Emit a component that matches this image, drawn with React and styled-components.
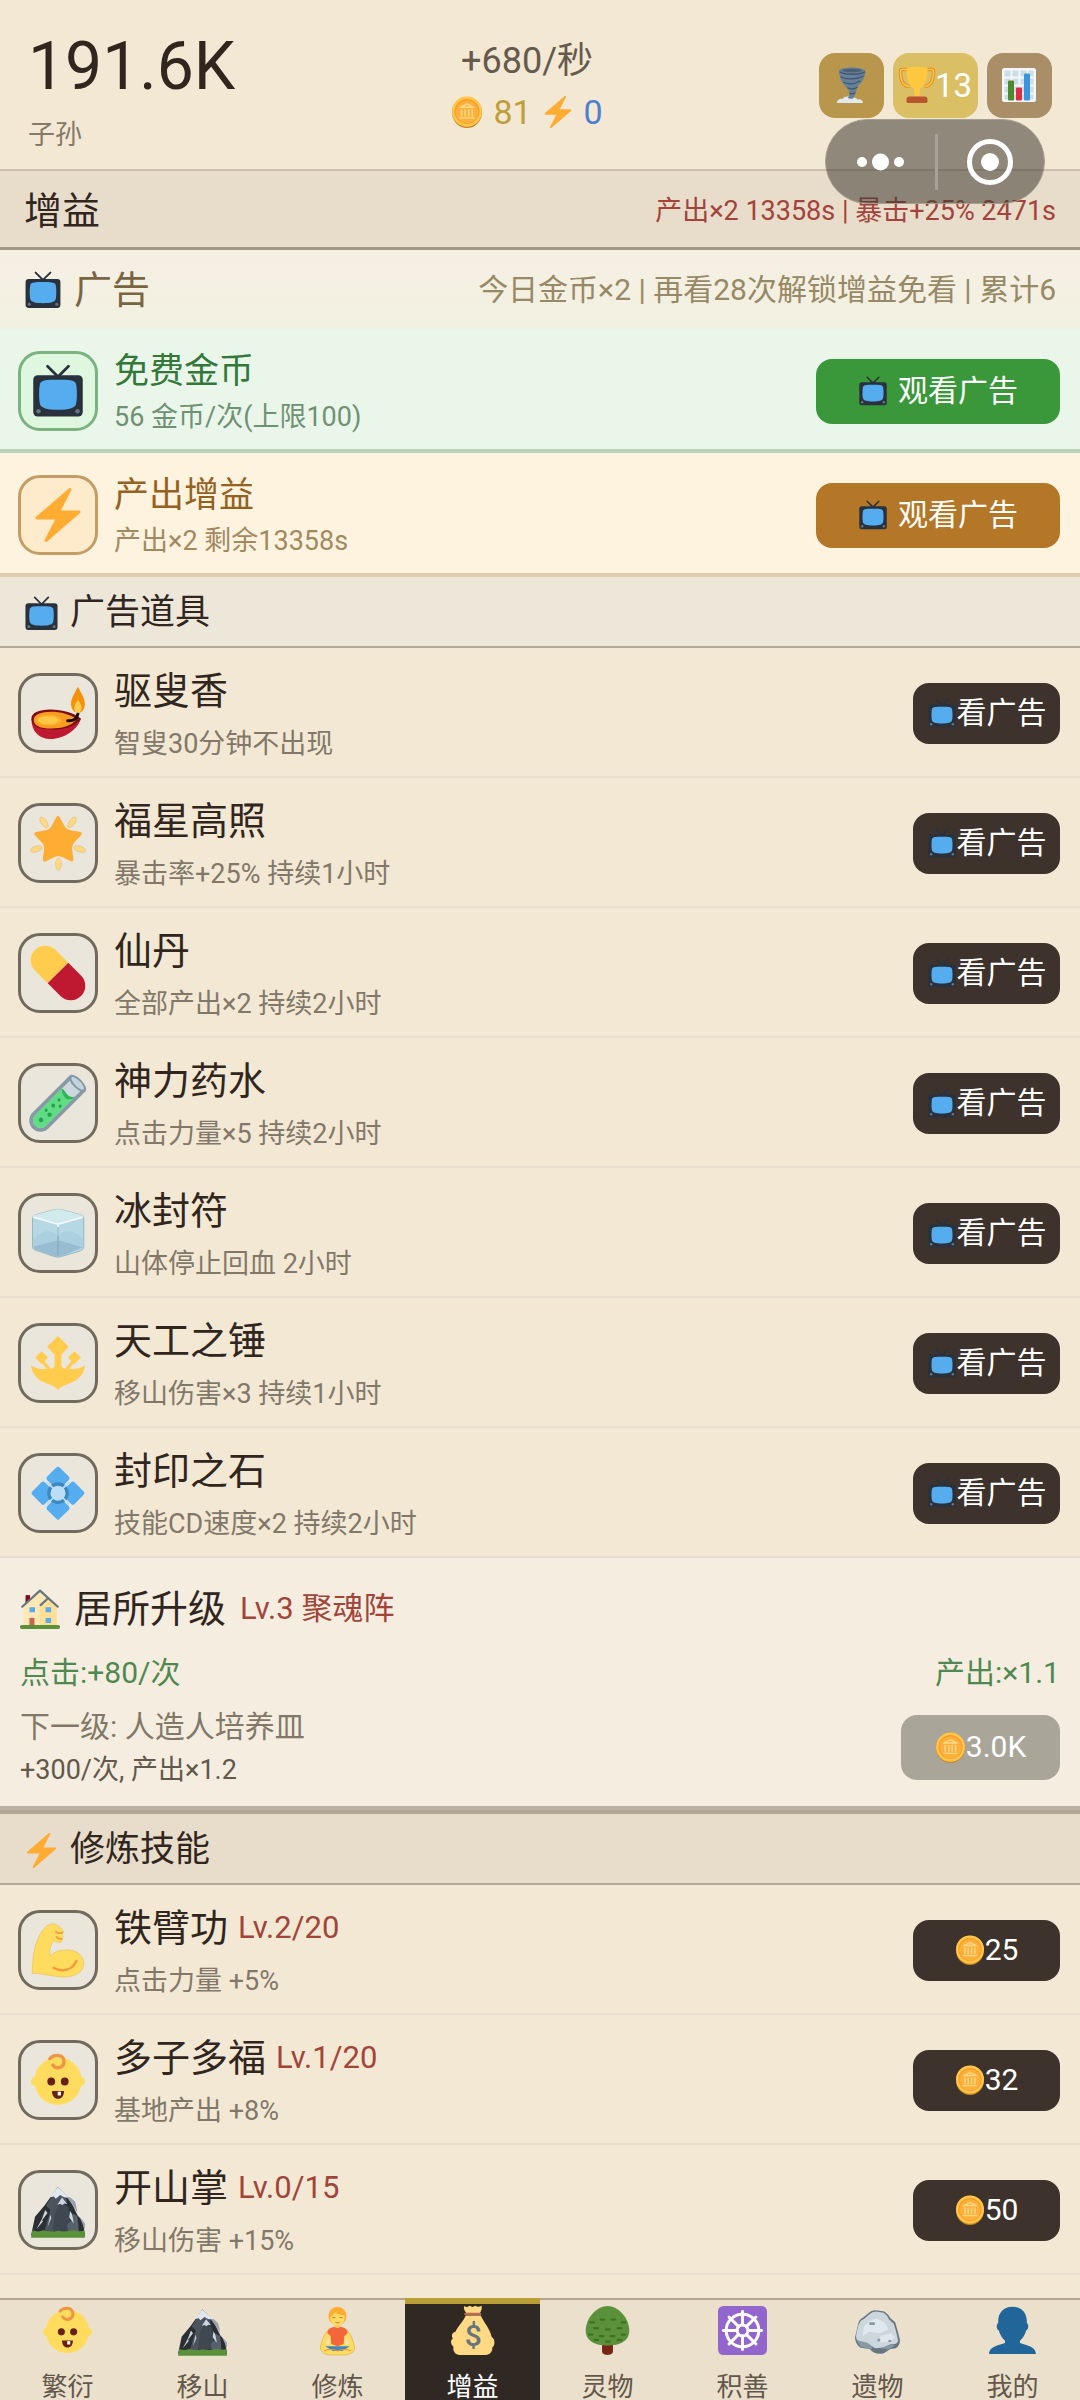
import React from 'react'
import styled, { createGlobalStyle, css } from 'styled-components'

const GlobalStyle = createGlobalStyle`
  * {
    box-sizing: border-box;
  }
  body {
    margin: 0;
    background: #f3e8d4;
    color: #30261e;
    font-family: Roboto, 'Noto Sans CJK SC', sans-serif;
  }
  button {
    font-family: inherit;
    border: 0;
    padding: 0;
    cursor: pointer;
  }
`

/* ---------- icons ---------- */

const Svg = styled.svg`
  display: block;
  flex: none;
  width: ${p => p.$size}px;
  height: ${p => p.$size}px;
`

const icons = {
  tv: (
    <>
      <path d="M11 1.5 18 8.5 25 1.5" fill="none" stroke="#29313a" strokeWidth="1.8" strokeLinecap="round" />
      <rect x="1.5" y="7.5" width="33" height="27.5" rx="3" fill="#29323c" />
      <path d="M18 10.500c8 0 10.500.3 11.700 2 1.200 1.900 1.200 13.100 0 15-1.200 1.700-3.700 3-11.700 3s-10.500-1.300-11.700-3c-1.200-1.900-1.200-13.100 0-15 1.200-1.700 3.700-2 11.700-2z" fill="#55acee" />
      <circle cx="5" cy="31.500" r="1.500" fill="#66757f" />
      <circle cx="31" cy="31.500" r="1.500" fill="#66757f" />
    </>
  ),
  bolt: (
    <path
      d="M32.938 15.651C32.792 15.260 32.418 15 32 15H19.925L26.890 1.458c.219-.426.106-.947-.271-1.243C26.437.071 26.218 0 26 0c-.233 0-.466.082-.653.243L18 6.588 3.347 19.243c-.316.273-.430.714-.284 1.105S3.582 21 4 21h12.075L9.110 34.542c-.219.426-.106.947.271 1.243.182.144.401.215.619.215.233 0 .466-.082.653-.243L18 29.412l14.653-12.655c.317-.273.430-.714.285-1.106z"
      fill="#ffac33"
    />
  ),
  coin: (
    <>
      <ellipse cx="18" cy="18.500" rx="16.800" ry="17.500" fill="#c9841f" />
      <ellipse cx="18" cy="17.500" rx="16.800" ry="17" fill="#ffc649" />
      <circle cx="18" cy="17.500" r="14" fill="#f59f27" />
      <circle cx="18" cy="18" r="12.800" fill="#fdae3b" />
      <path d="M18 8 9.500 12.300v1.200h17v-1.200zM18 9.800l3.500 1.900h-7zM11 15h1.800v8H11zm4 0h1.800v8H15zm4 0h1.800v8H19zm4 0h1.800v8H23zM9.500 24h17v1.600h-17z" fill="#ffd983" fillRule="evenodd" />
    </>
  ),
  lamp: (
    <>
      <path d="M.3 22c0 9 5.700 13.300 12.700 13.300C22 35.300 31 29 33.300 21.800z" fill="#be1931" />
      <path d="M.3 22C.1 18 5 15.700 13 15.700s16 2.300 20.300 6.100C29 28 20 29 14 29 6 29 .5 27 .3 22z" fill="#7d0c16" />
      <path d="M1.800 22.600c0-3.600 5.200-5.400 11.200-5.400 7 0 13 1.800 17.500 4.800C27 27 20 28.300 13.500 28.300 6.500 28.300 1.800 26.500 1.800 22.600z" fill="#f99d1f" />
      <ellipse cx="12" cy="22.800" rx="8.500" ry="3.600" fill="#ffac33" />
      <ellipse cx="11.500" cy="22.800" rx="6.800" ry="2.700" fill="#ffc845" />
      <path d="M24.500 23.200c3.500.3 6-1.200 6.800-4.700" fill="none" stroke="#1b0c07" strokeWidth="2" strokeLinecap="round" />
      <path d="M31.300.3c1.500 3.500 4.600 7.500 4.600 11.500 0 3.800-1.900 6-4.500 6s-4.700-2.200-4.700-6c0-4 3.200-8 4.600-11.500z" fill="#f4900c" />
      <path d="M31.300 9c.8 1.800 2.400 3.300 2.400 5.500 0 2.200-1 3.300-2.400 3.300s-2.500-1.100-2.500-3.300c0-2.200 1.700-3.700 2.500-5.500z" fill="#ffcc4d" />
    </>
  ),
  star: (
    <>
      <path
        d="M28.840 17.638c-.987 1.044-1.633 3.067-1.438 4.493l.892 6.441c.197 1.427-.701 2.087-1.996 1.469l-5.851-2.796c-1.295-.620-3.408-.611-4.700.018l-5.826 2.842c-1.291.629-2.193-.026-2.007-1.452l.843-6.449c.186-1.427-.475-3.444-1.470-4.481l-4.494-4.688c-.996-1.037-.655-2.102.755-2.365l6.370-1.188c1.410-.263 3.116-1.518 3.793-2.789L16.762.956c.675-1.271 1.789-1.274 2.473-.009L22.330 6.660c.686 1.265 2.400 2.507 3.814 2.758l6.378 1.141c1.412.252 1.761 1.314.774 2.359l-4.456 4.720z"
        fill="#ffac33"
      />
      {[[8.700, 4.300, -35], [27.300, 4.300, 35], [3.500, 22, 72], [32.500, 22, -72], [18.300, 32.200, 0]].map(([x, y, r]) => (
        <ellipse key={r} cx={x} cy={y} rx="1.900" ry="4" fill="#ffd983" stroke="#dcae62" strokeWidth=".3" transform={`rotate(${r} ${x} ${y})`} />
      ))}
    </>
  ),
  pill: (
    <g transform="rotate(45 18 18)">
      <path d="M18 8.300H6a9.700 9.700 0 0 0 0 19.400h12z" fill="#ffcc4d" />
      <path d="M18 8.300h12a9.700 9.700 0 0 1 0 19.400H18z" fill="#be1931" />
    </g>
  ),
  tube: (
    <g transform="rotate(45 18 18)">
      <path d="M10.500-.5v35a7.500 7.500 0 0 0 15 0V-.5z" fill="#8899a6" />
      <path d="M13 1v33.500a5 5 0 0 0 10 0V1z" fill="#ccd6dd" />
      <path d="M13 9.500c3-1.500 7 2.500 10-1v26a5 5 0 0 1-10 0z" fill="#5fdc84" />
      <path d="M13 9.500c3-1.500 7 2.500 10-2.500 0 6.500-6.500 6-10 2.500z" fill="#2fb457" />
      <ellipse cx="18" cy="-.5" rx="7.500" ry="3.200" fill="#8899a6" />
      <ellipse cx="18" cy="-.5" rx="5.600" ry="1.900" fill="#c3d3df" />
      <g fill="#2a9d4e">
        <circle cx="18" cy="34" r="1.500" />
        <circle cx="19.500" cy="27.500" r="1.400" />
        <circle cx="15.800" cy="27" r="1" />
        <circle cx="17" cy="21.500" r="1.300" />
        <circle cx="20.500" cy="18.500" r="1" />
        <circle cx="17" cy="16" r="1" />
      </g>
    </g>
  ),
  ice: (
    <>
      <path d="M1 8.500Q1 6.500 3 5.800L15 2.600q3-.8 6 0L33 5.800q2.200.6 2.200 2.700V27q0 2-2 2.900L21 33.500q-3 1.200-6 0L3 29.500Q1 29 1 27z" fill="#b5d8e4" stroke="#88abb8" strokeWidth=".5" />
      <path d="M1.300 8Q1 6.500 3 5.800L15 2.600q3-.8 6 0L33 5.800q2.200.6 1.500 2.200L20.500 11.500q-2.500 1-5 0z" fill="#d3eaed" />
      <path d="M1.500 27 16 23.200q2-.7 4 0L34.700 27.500 21 33.200q-3 1.200-6 0L3 29z" fill="#98bcd0" />
      <path d="M18 20C13 15 8 16 1.500 22V27L18 23zM18 20c5-5 10-4 16.800 1.500V27L18 23z" fill="#a7cddd" opacity=".7" />
      <path d="M2 7.500 15.500 11.500q2.500 1 5 0L34.500 7.500M18 12v8" fill="none" stroke="#f4fafb" strokeWidth="1" />
      <path d="M18 14V33" stroke="#86aabd" strokeWidth=".8" />
    </>
  ),
  trident: (
    <>
      <path
        d="M18 0 25.200 7.200 20.200 12.500V19.500Q20.800 22.300 24 21.500L27 22Q31.500 22.500 36 19.500 35 28 26 31.500 20 33.200 18 36 16 33.200 10 31.500 1 28 0 19.500 4.500 22.500 9 22L12 21.500Q15.200 22.300 15.800 19.500V12.500L10.800 7.200z"
        fill="#ffcc4d"
      />
      <path d="m7 10.100 4.300 4.300L7 18.700 2.700 14.400zM29 10.100l4.300 4.300-4.300 4.300-4.300-4.300z" fill="#ffcc4d" />
      <path d="m7.500 16.500 4.500 5.500m16.500-5.500L24 22" stroke="#ffcc4d" strokeWidth="2.200" />
    </>
  ),
  gem: (
    <>
      {[[18, 8.200], [18, 28], [8.100, 18.100], [27.900, 18.100]].map(([x, y]) => (
        <rect key={`${x}-${y}`} x={x - 5.900} y={y - 5.900} width="11.800" height="11.800" rx="1.600" fill="#55acee" transform={`rotate(45 ${x} ${y})`} />
      ))}
      <circle cx="18" cy="18.100" r="7.200" fill="#3b88c3" />
      <path d="m10.500 10.600 15 15m0-15-15 15" stroke="#bbddf5" strokeWidth="1.200" />
      <circle cx="18" cy="18.100" r="5" fill="#bbddf5" />
    </>
  ),
  muscle: (
    <>
      <path
        d="M.8 33.500C1.200 25 1.500 19 3.500 13.500 5.500 7.500 9 1.800 13.500.5c3-.5 6.500 2.300 8 4.800.5 1-.3 2-.8 2.200.8 1 .8 2 .2 2.800.3 1.500-.7 3-2 2.700-1.500 0-2.700-1.200-3.900-.8-1.700 2-3 5.500-2.300 9.800C15.500 19.500 18.500 18 24 17.900c6.500 0 11.200 4 11.200 9C35 32.500 30 36 22 36c-7.500 0-14-2.500-21.200-2.500z"
        fill="#ffdc5d"
        stroke="#d9b548"
        strokeWidth=".3"
      />
      <path d="M15 29.800c6 3.500 12.500 1.500 15.300-4.500" fill="none" stroke="#f19a3e" strokeWidth="1.600" strokeLinecap="round" />
      <path d="M20.800 6.300c-1.500.9-3 .5-4.200-.6M20.500 10.500c-1.500.3-2.700-.3-3.500-1.200" fill="none" stroke="#f19a3e" strokeWidth="1.100" strokeLinecap="round" />
    </>
  ),
  baby: (
    <>
      <circle cx="3" cy="19" r="3" fill="#ffdc5d" />
      <circle cx="33" cy="19" r="3" fill="#ffdc5d" />
      <path d="M18 2.800c8.500 0 15.800 7 15.800 15.700 0 9-7 16-15.800 16s-15.800-7-15.800-16C2.200 9.800 9.500 2.800 18 2.800z" fill="#ffdc5d" />
      <path d="M12.500 3.800C15 .8 21.500.5 22 5.500c.3 4-5 6-7.500 2.500" fill="none" stroke="#ef9645" strokeWidth="2.200" strokeLinecap="round" />
      <circle cx="13.500" cy="19" r="2.600" fill="#662113" />
      <circle cx="22.500" cy="19" r="2.600" fill="#662113" />
      <path d="M14 25.300h8c0 3.300-1.700 5.200-4 5.200s-4-1.900-4-5.200z" fill="#662113" />
      <path d="M17.800 25.800h2.200v2.500h-2.200z" fill="#fff" />
    </>
  ),
  mountain: (
    <>
      <path d="M18 2.500 26 11l5 10.500 3.500 4L36 35H0l2.700-12.500L9 15z" fill="#292f33" />
      <path d="M18 2.500 23.500 9l.5 4-5 2-5 20H8l5-17-3-3z" fill="#4b545d" />
      <path d="M19.500 12 25 16l2 16H14.500l1.500-12z" fill="#3f4850" />
      <path d="M28 20.500 31 22l1 11h-7l-1-5 3-3z" fill="#58616b" />
      <path d="M18 2.500 12.500 9.500l2.700-.5 1.300 1.500L19.500 8l2.500 1.500 3.500.5z" fill="#e1e8ed" />
      <path d="M20.700 9.700 17.500 14.500l2-.6 1.200 1 1.500-1.200 2 .5zM9.500 18 6.500 26l4.500-6zM7 24.500 3.500 31 8 25.500zM13 21l-2 8.500 2.500-6zM26 18.500 25.500 23l3 4-1-6z" fill="#ccd6dd" />
      <path d="M24 9.500 31 19.500l-1.500-7L26 9.500zM32 22l4 5v4z" fill="#99a4ae" />
      <path d="M0 36.500 1 31.500Q5 33 8 31.500q6 1.500 10 .3 6 1 10-.3 4 1 7.500.3l.5 4.700z" fill="#5c913b" />
    </>
  ),
  house: (
    <>
      <path d="M5 5.500h4V15H5z" fill="#7d0c1c" />
      <path d="M3 15.500 18 2l15 13.500V33H3z" fill="#ffe8b6" />
      <path d="M18 15l7-7 8 7.500V33H18z" fill="#ffdf95" />
      <path d="M2 16 18 1.500 34 16M18.500 14.500 25 8.500" fill="none" stroke="#66757f" strokeWidth="2" strokeLinecap="round" strokeLinejoin="round" />
      <path d="M8.500 16.500h5v4.500h-5zm14.500 0h5v4.500h-5zm0 9.500h5v4.500h-5z" fill="#55acee" />
      <path d="M8.500 26H13v7H8.500z" fill="#c1694f" />
      <rect x="0" y="32.500" width="36" height="3.500" rx="1.500" fill="#5c913b" />
    </>
  ),
  lotus: (
    <>
      <path d="M11.500 17C8 21 6.500 25.500 5.500 30c-.5 4 4 6 7.500 6h10c4 0 8-2 7.500-6-1-4.500-2.500-9-6-13z" fill="#ffdc5d" stroke="#e0a848" strokeWidth=".5" />
      <path d="M12 21 9.500 28.500H12zm12 0 2.500 7.500H24z" fill="#ebe1cc" />
      <path d="M9 29.500h18L21.500 33h-7z" fill="#3b88c3" />
      <path d="M10.500 20c.5-3 2.500-4.300 5-4.500h5c2.500.2 4.500 1.500 5 4.500l-2.500 2-.5 6-4.500 1.500-4.500-1.500-.5-6z" fill="#f4663a" />
      <path d="M16 12h4v3.500q-2 1.500-4 0z" fill="#f9ca55" />
      <circle cx="18" cy="7.300" r="6.700" fill="#ffac33" />
      <path d="M12.600 8c1.500-1 3-2.500 3.500-3.500 1.500 1.500 4.500 2 7.200 2.300.6 4.500-2 7.500-5.300 7.500S12.500 11.500 12.600 8z" fill="#ffdc5d" />
      <path d="M14.300 8.500h2.200m3 0h2.200M16.500 12q1.500 1 3 0" fill="none" stroke="#c1694f" strokeWidth=".7" />
      <path d="M8 33q5-2 10 0 5-2 10 0" fill="none" stroke="#ef9645" strokeWidth=".8" />
    </>
  ),
  bag: (
    <>
      <path d="M12 0c1.500 1.500 3 .3 4-.1 1.500 1 2.500 1 4 0 1.500.8 3 1 4.500 0 1 2-.5 4.500-1.500 6H14c-1.500-2-3-4-2-5.900z" fill="#ffd983" />
      <path d="M13 7h11c2 4.500 7 10 8 15.500 3 2 2.500 6.500.5 8C33 33 31 36 27.500 36H9C5 36 3.500 33 4 30c-2-2-2.500-5-.5-6C2 21 3.500 19.500 5.500 19 7.500 14.500 11.500 11 13 7z" fill="#ffd983" />
      <rect x="12" y="5" width="12.500" height="1.800" rx=".9" fill="#bf6952" />
      <text x="18.500" y="29.500" textAnchor="middle" fontSize="22" fontFamily="Roboto, sans-serif" fontWeight="500" fill="#67757f">$</text>
    </>
  ),
  tree: (
    <>
      <path d="M14 27h8v6.500c0 3.300-8 3.300-8 0z" fill="#782412" />
      <path d="M18 0c8 0 16 9 16 18 0 8-7 11-16 11S2 26 2 18C2 9 10 0 18 0z" fill="#5c913b" />
      <path
        d="M5.500 12h2.500m5-2h2.500m5.500 0h2.500m5 2h2.500M8.500 16.300H11m6 .9h2.500m6-.9H28M4.500 21H7m5.500 1.200H15m5.500 0H23m5.500-1.200H31M8.500 25H11m6 1.200h2.500m6-1.200H28"
        stroke="#3e721d"
        strokeWidth="1.700"
        strokeLinecap="round"
      />
    </>
  ),
  wheel: (
    <>
      <rect width="36" height="36" rx="4" fill="#9266cc" />
      <g fill="none" stroke="#fff" strokeWidth="2.200" strokeLinecap="round">
        <circle cx="18" cy="18" r="12" />
        <circle cx="18" cy="18" r="4" />
        {[0, 45, 90, 135, 180, 225, 270, 315].map(a => (
          <path key={a} d="M18 14V4" transform={`rotate(${a} 18 18)`} />
        ))}
      </g>
    </>
  ),
  rock: (
    <>
      <path d="M11 5.500Q14 2.500 18 3.300L23 4q3 2 4.500 5l3.500 3 2 7 1.500 6q0 4-3 6l-4 .5-4.500 3Q19 36 15 34l-3-2.500-6.500-.8Q1.500 28 1.500 23l2-8.500Q4 10 7.500 8.500z" fill="#66757f" />
      <path d="M11.500 6.500Q15 3.500 18 4.300l4.500.7q3 2 4 5l3.500 3 2 7 1.200 5.500q-1 3-5 2.500l-5 2.500-7 .5-5.500-3.500-7-1.500q-2-2-1.200-6l1.500-6Q5.500 10 8 9.500z" fill="#ccd6dd" />
      <path d="M12 11l5-2 6 3 3 5-6 3-8-1-5 3 1-7zM20 22l8-2 3 3-4 3-8 1z" fill="#dfe8ee" />
      <path d="M2.500 25l8 2 4 3-1 2-8-2zM20 31l8-3 3 1-5 3zM12 12h4v2h-4zM18 24h2v2h-2zM26 25h2v1.500h-2z" fill="#8899a6" />
    </>
  ),
  user: (
    <path
      d="M18 .5C24.500.5 28.500 5 28.500 11v1.500c1.500 1 1.500 4.500-.5 5.500-1 4-3 6-4.500 7.500v1.700c3.500 1.500 11.500 2 11.700 8H.8c.2-6 8.200-6.500 11.700-8v-1.700C11 24 9 22 8 18c-2-1-2-4.500-.5-5.500V11C7.500 5 11.500.5 18 .5z"
      fill="#226699"
    />
  ),
  tornado: (
    <>
      <path d="M3.500 36c1-3.500 4-5 6-4 2-3 7-3 9-1 3-1 5 0 6 1.500 3-1 5 .5 5.500 3.500z" fill="#e1e8ed" />
      <path d="M6 3.500c1-4 24-4 26 0 .7 3-.2 6-1.500 8.500-2 4-5 6-6.500 9.500-1 3-1 5-4 10-2 .5-4 .3-5-.7 3-4 1.500-7-1.500-10.300C9.500 16.500 6.500 12 6 3.500z" fill="#66809a" />
      <path d="M7 5c5 3 20 3 24.500 0M8 10c6 3 16 2.500 22-1M11 15.500c5 2 11 1.500 16-1.500M15 21c3 1.200 6 1 9-.5M17 26.500q3 .5 5-.5" fill="none" stroke="#3f5468" strokeWidth="1.300" strokeLinecap="round" />
      <ellipse cx="19" cy="3.500" rx="10" ry="1.800" fill="#4b6075" />
    </>
  ),
  trophy: (
    <>
      <path d="M8 2.500H3Q1.500 2.500 1.500 4.500c0 7 1 14.500 9 15M28 2.500h5q1.500 0 1.500 2c0 7-1 14.500-9 15" fill="none" stroke="#e08b22" strokeWidth="3.400" />
      <path d="M8 2.500H3Q1.500 2.500 1.500 4.500c0 7 1 14.500 9 15M28 2.500h5q1.500 0 1.500 2c0 7-1 14.500-9 15" fill="none" stroke="#ffc843" strokeWidth="1.600" />
      <path d="M7.500.8Q18-.8 28.500.8c.5 10.500-2 17.700-7.500 20.700l-.5 8h-5l-.5-8C9.500 18.500 7 11.500 7.500.8z" fill="#ffc83f" />
      <path d="M7.500 34.500V32q0-2.500 3-2.500h15q3 0 3 2.500v2.500q0 1.500-2 1.500h-17q-2 0-2-1.500z" fill="#b8552f" />
    </>
  ),
  chart: (
    <>
      <rect x="1" y="1" width="34" height="34" rx="2.500" fill="#f5f8fa" />
      <path d="M3.500 3.500h6v6h-6zm8 0h6v6h-6zm8 0h6v6h-6zm8 0h5v6h-5zm-24 8h6v6h-6zm8 0h6v6h-6zm8 0h6v6h-6zm8 0h5v6h-5zm-24 8h6v6h-6zm8 0h6v6h-6zm8 0h6v6h-6zm8 0h5v6h-5zm-24 8h6v5h-6zm8 0h6v5h-6zm8 0h6v5h-6zm8 0h5v5h-5z" fill="#ccdde8" />
      <rect x="7" y="13.500" width="6" height="20" rx="1" fill="#4f8a2e" />
      <rect x="15" y="20.500" width="6" height="13" rx="1" fill="#dd2e44" />
      <rect x="23" y="6.500" width="6" height="27" rx="1" fill="#3b94d9" />
    </>
  ),
}

function Emoji({ name, size }) {
  return (
    <Svg $size={size} viewBox="0 0 36 36" overflow="visible" aria-hidden="true">
      {icons[name]}
    </Svg>
  )
}

/* ---------- layout ---------- */

const Page = styled.div`
  position: relative;
  display: flex;
  flex-direction: column;
  height: 100vh;
  overflow: hidden;
`

const Main = styled.main`
  flex: 1;
  min-height: 0;
  overflow: hidden;
`

const Header = styled.header`
  display: flex;
  align-items: center;
  justify-content: space-between;
  padding: 17px 28px 16px;
  border-bottom: 2px solid #cdc1ad;
`

const Total = styled.div`
  font-size: 66px;
  line-height: 100px;
`

const TotalLabel = styled.div`
  font-size: 27px;
  line-height: 36px;
  color: #857a69;
`

const Income = styled.div`
  display: flex;
  flex-direction: column;
  align-items: center;
  gap: 4px;
`

const Rate = styled.div`
  font-size: 36px;
  line-height: 50px;
  color: #655a4c;
`

const Purse = styled.div`
  display: flex;
  align-items: center;
  gap: 10px;
  font-size: 34px;
  line-height: 44px;
`

const Gold = styled.span`
  color: #bf9f3b;
`

const Energy = styled.span`
  color: #4f7fd0;
`

const Shortcuts = styled.div`
  display: flex;
  gap: 9px;
`

const Shortcut = styled.button`
  display: flex;
  align-items: center;
  justify-content: center;
  min-width: 65px;
  height: 65px;
  padding: 0 6px;
  border-radius: 16px;
  background: ${p => p.$bg};
  color: #fff;
  font-size: 33px;
`

const Capsule = styled.div`
  position: absolute;
  top: 119px;
  right: 35px;
  z-index: 2;
  display: flex;
  align-items: center;
  width: 220px;
  height: 85px;
  border: 1px solid #a79f90;
  border-radius: 43px;
  background: rgba(62, 58, 50, 0.55);
`

const CapsuleButton = styled.button`
  display: flex;
  flex: 1;
  align-items: center;
  justify-content: center;
  height: 100%;
  background: none;
  & + & {
    position: relative;
  }
  & + &::before {
    content: '';
    position: absolute;
    left: 0;
    width: 3px;
    height: 56px;
    background: #a8a195;
  }
`

const TitleBar = styled.div`
  display: flex;
  align-items: center;
  justify-content: space-between;
  padding: 10px 24px 6px;
  border-bottom: 3px solid #a39785;
  background: #e8ddca;
  line-height: 60px;
`

const PageTitle = styled.h1`
  margin: 0;
  font-size: 38px;
  font-weight: 400;
`

const ActiveBuffs = styled.span`
  font-size: 27px;
  color: #a3433b;
`

const AdHeader = styled.div`
  display: flex;
  align-items: center;
  justify-content: space-between;
  padding: 10px 24px 9px;
  background: linear-gradient(#f5efe3, #f2f1e1);
  line-height: 60px;
`

const AdTitle = styled.h2`
  display: flex;
  align-items: center;
  gap: 12px;
  margin: 0;
  font-size: 38px;
  font-weight: 400;
  color: #7a6542;
`

const AdSummary = styled.span`
  font-size: 30px;
  color: #978965;
`

const promoTones = {
  green: { bg: '#ebf6eb', line: '#b8d3b8', box: '#dff6df', edge: '#7ab380', title: '#33783a', text: '#6f9174', button: '#3b983a' },
  amber: { bg: '#fef3df', line: '#dfcdad', box: '#feebcc', edge: '#c49d66', title: '#95611f', text: '#a18a62', button: '#b47728' },
}

const Promo = styled.section`
  display: flex;
  align-items: center;
  padding: 18px 20px 14px 18px;
  border-bottom: 4px solid ${p => p.$tone.line};
  background: ${p => p.$tone.bg};
`

const IconBox = styled.div`
  display: flex;
  flex: none;
  align-items: center;
  justify-content: center;
  width: 80px;
  height: 80px;
  border: 3px solid ${p => p.$edge || '#736a5e'};
  border-radius: 22px;
  background: ${p => p.$bg || '#eae6db'};
`

const Info = styled.div`
  display: flex;
  flex: 1;
  flex-direction: column;
  gap: 2px;
  min-width: 0;
  padding-left: 16px;
`

const PromoTitle = styled.h3`
  margin: 0;
  font-size: 35px;
  font-weight: 400;
  line-height: 50px;
  color: ${p => p.$tone.title};
`

const PromoText = styled.p`
  margin: 0;
  font-size: 27px;
  line-height: 36px;
  color: ${p => p.$tone.text};
`

const buttonBase = css`
  display: flex;
  flex: none;
  align-items: center;
  justify-content: center;
  border-radius: 16px;
  color: #fff;
  font-size: 30px;
  line-height: 44px;
`

const WatchButton = styled.button`
  ${buttonBase}
  gap: 10px;
  width: 244px;
  height: 65px;
  background: ${p => p.$tone.button};
`

const ItemButton = styled.button`
  ${buttonBase}
  width: 147px;
  height: 61px;
  background: #3d322c;
`

const UpgradeButton = styled.button`
  ${buttonBase}
  width: 159px;
  height: 65px;
  background: #a9a599;
`

const SectionTitle = styled.h2`
  display: flex;
  align-items: center;
  gap: 11px;
  margin: 0;
  padding: 11px 24px 8px;
  border-top: ${p => (p.$divided ? '4px solid #b1a694' : '0')};
  border-bottom: 2px solid #b3a998;
  background: ${p => (p.$divided ? '#e8ddca' : '#ede7da')};
  font-size: 35px;
  font-weight: 400;
  line-height: 50px;
`

const List = styled.ul`
  margin: 0;
  padding: 0;
  list-style: none;
`

const Item = styled.li`
  display: flex;
  align-items: center;
  padding: 13px 20px 11px 18px;
  border-bottom: 2px solid #e7dfce;
`

const ItemTitle = styled.h3`
  display: flex;
  align-items: center;
  gap: 10px;
  margin: 0;
  font-size: 38px;
  font-weight: 400;
  line-height: 60px;
`

const ItemText = styled.p`
  margin: 0;
  font-size: 27px;
  line-height: 42px;
  color: #82786a;
`

const Level = styled.span`
  font-size: 31px;
  color: #a1453b;
`

const Home = styled.section`
  padding: 25px 20px 16px;
  border-bottom: 4px solid #bab1a4;
  background: #f5eee0;
`

const HomeTitle = styled.h2`
  display: flex;
  align-items: center;
  gap: 14px;
  margin: 0 0 16px;
  font-size: 38px;
  font-weight: 400;
  line-height: 52px;
`

const HomeStats = styled.div`
  display: flex;
  justify-content: space-between;
  margin-bottom: 9px;
  font-size: 30px;
  line-height: 44px;
  color: #4f8850;
`

const HomeNext = styled.div`
  display: flex;
  align-items: center;
  justify-content: space-between;
`

const NextName = styled.div`
  font-size: 30px;
  line-height: 46px;
  color: #827868;
`

const NextEffect = styled.div`
  font-size: 27px;
  line-height: 40px;
  color: #62584b;
`

const Tabs = styled.nav`
  display: flex;
  flex: none;
`

const Tab = styled.button`
  display: flex;
  flex: 1;
  flex-direction: column;
  align-items: center;
  justify-content: flex-start;
  gap: 20px;
  padding: ${p => (p.$active ? 2 : 6)}px 0 1px;
  border-top: ${p => (p.$active ? '6px solid #b99e35' : '2px solid #b3a791')};
  background: ${p => (p.$active ? '#302823' : '#ebe0cc')};
  color: ${p => (p.$active ? '#fff' : '#62574a')};
  font-size: 26px;
  line-height: 24px;
`

/* ---------- data ---------- */

const items = [
  { icon: 'lamp', name: '驱叟香', text: '智叟30分钟不出现' },
  { icon: 'star', name: '福星高照', text: '暴击率+25% 持续1小时' },
  { icon: 'pill', name: '仙丹', text: '全部产出×2 持续2小时' },
  { icon: 'tube', name: '神力药水', text: '点击力量×5 持续2小时' },
  { icon: 'ice', name: '冰封符', text: '山体停止回血 2小时' },
  { icon: 'trident', name: '天工之锤', text: '移山伤害×3 持续1小时' },
  { icon: 'gem', name: '封印之石', text: '技能CD速度×2 持续2小时' },
]

const skills = [
  { icon: 'muscle', name: '铁臂功', level: 'Lv.2/20', text: '点击力量 +5%', cost: 25 },
  { icon: 'baby', name: '多子多福', level: 'Lv.1/20', text: '基地产出 +8%', cost: 32 },
  { icon: 'mountain', name: '开山掌', level: 'Lv.0/15', text: '移山伤害 +15%', cost: 50 },
]

const tabs = [
  { icon: 'baby', label: '繁衍' },
  { icon: 'mountain', label: '移山' },
  { icon: 'lotus', label: '修炼' },
  { icon: 'bag', label: '增益', active: true },
  { icon: 'tree', label: '灵物' },
  { icon: 'wheel', label: '积善' },
  { icon: 'rock', label: '遗物' },
  { icon: 'user', label: '我的' },
]

/* ---------- parts ---------- */

function PromoRow({ tone, icon, title, text }) {
  const t = promoTones[tone]
  return (
    <Promo $tone={t}>
      <IconBox $edge={t.edge} $bg={t.box}><Emoji name={icon} size={54} /></IconBox>
      <Info>
        <PromoTitle $tone={t}>{title}</PromoTitle>
        <PromoText $tone={t}>{text}</PromoText>
      </Info>
      <WatchButton type="button" $tone={t}><Emoji name="tv" size={30} />观看广告</WatchButton>
    </Promo>
  )
}

function ItemRow({ icon, name, level, text, children }) {
  return (
    <Item>
      <IconBox><Emoji name={icon} size={54} /></IconBox>
      <Info>
        <ItemTitle>{name}{level && <Level>{level}</Level>}</ItemTitle>
        <ItemText>{text}</ItemText>
      </Info>
      <ItemButton type="button">{children}</ItemButton>
    </Item>
  )
}

function SystemCapsule() {
  return (
    <Capsule>
      <CapsuleButton type="button" aria-label="更多">
        <svg width="48" height="18" viewBox="0 0 48 18" fill="#fff">
          <circle cx="5" cy="9" r="5" />
          <circle cx="23.500" cy="9" r="8.500" />
          <circle cx="42" cy="9" r="5" />
        </svg>
      </CapsuleButton>
      <CapsuleButton type="button" aria-label="关闭">
        <svg width="46" height="46" viewBox="0 0 46 46">
          <circle cx="23" cy="23" r="20.500" fill="none" stroke="#fff" strokeWidth="5" />
          <circle cx="23" cy="23" r="9" fill="#fff" />
        </svg>
      </CapsuleButton>
    </Capsule>
  )
}

function App() {
  return (
    <Page>
      <GlobalStyle />
      <Main>
        <Header>
          <div>
            <Total>191.6K</Total>
            <TotalLabel>子孙</TotalLabel>
          </div>
          <Income>
            <Rate>+680/秒</Rate>
            <Purse>
              <Emoji name="coin" size={32} />
              <Gold>81</Gold>
              <Emoji name="bolt" size={32} />
              <Energy>0</Energy>
            </Purse>
          </Income>
          <Shortcuts>
            <Shortcut type="button" aria-label="龙卷风" $bg="#b8964c"><Emoji name="tornado" size={36} /></Shortcut>
            <Shortcut type="button" $bg="#dbbf65"><Emoji name="trophy" size={36} />13</Shortcut>
            <Shortcut type="button" aria-label="统计" $bg="#a98e68"><Emoji name="chart" size={36} /></Shortcut>
          </Shortcuts>
        </Header>
        <SystemCapsule />

        <TitleBar>
          <PageTitle>增益</PageTitle>
          <ActiveBuffs>产出×2 13358s | 暴击+25% 2471s</ActiveBuffs>
        </TitleBar>

        <AdHeader>
          <AdTitle><Emoji name="tv" size={38} />广告</AdTitle>
          <AdSummary>今日金币×2 | 再看28次解锁增益免看 | 累计6</AdSummary>
        </AdHeader>
        <PromoRow tone="green" icon="tv" title="免费金币" text="56 金币/次(上限100)" />
        <PromoRow tone="amber" icon="bolt" title="产出增益" text="产出×2 剩余13358s" />

        <SectionTitle><Emoji name="tv" size={35} />广告道具</SectionTitle>
        <List>
          {items.map(item => (
            <ItemRow key={item.name} {...item}><Emoji name="tv" size={30} />看广告</ItemRow>
          ))}
        </List>

        <Home>
          <HomeTitle>
            <Emoji name="house" size={40} />居所升级<Level>Lv.3 聚魂阵</Level>
          </HomeTitle>
          <HomeStats>
            <span>点击:+80/次</span>
            <span>产出:×1.1</span>
          </HomeStats>
          <HomeNext>
            <div>
              <NextName>下一级: 人造人培养皿</NextName>
              <NextEffect>+300/次, 产出×1.2</NextEffect>
            </div>
            <UpgradeButton type="button"><Emoji name="coin" size={31} />3.0K</UpgradeButton>
          </HomeNext>
        </Home>

        <SectionTitle $divided><Emoji name="bolt" size={35} />修炼技能</SectionTitle>
        <List>
          {skills.map(({ cost, ...skill }) => (
            <ItemRow key={skill.name} {...skill}><Emoji name="coin" size={30} />{cost}</ItemRow>
          ))}
        </List>
      </Main>

      <Tabs>
        {tabs.map(tab => (
          <Tab key={tab.label} type="button" $active={tab.active}>
            <Emoji name={tab.icon} size={49} />
            {tab.label}
          </Tab>
        ))}
      </Tabs>
    </Page>
  )
}

export default App
